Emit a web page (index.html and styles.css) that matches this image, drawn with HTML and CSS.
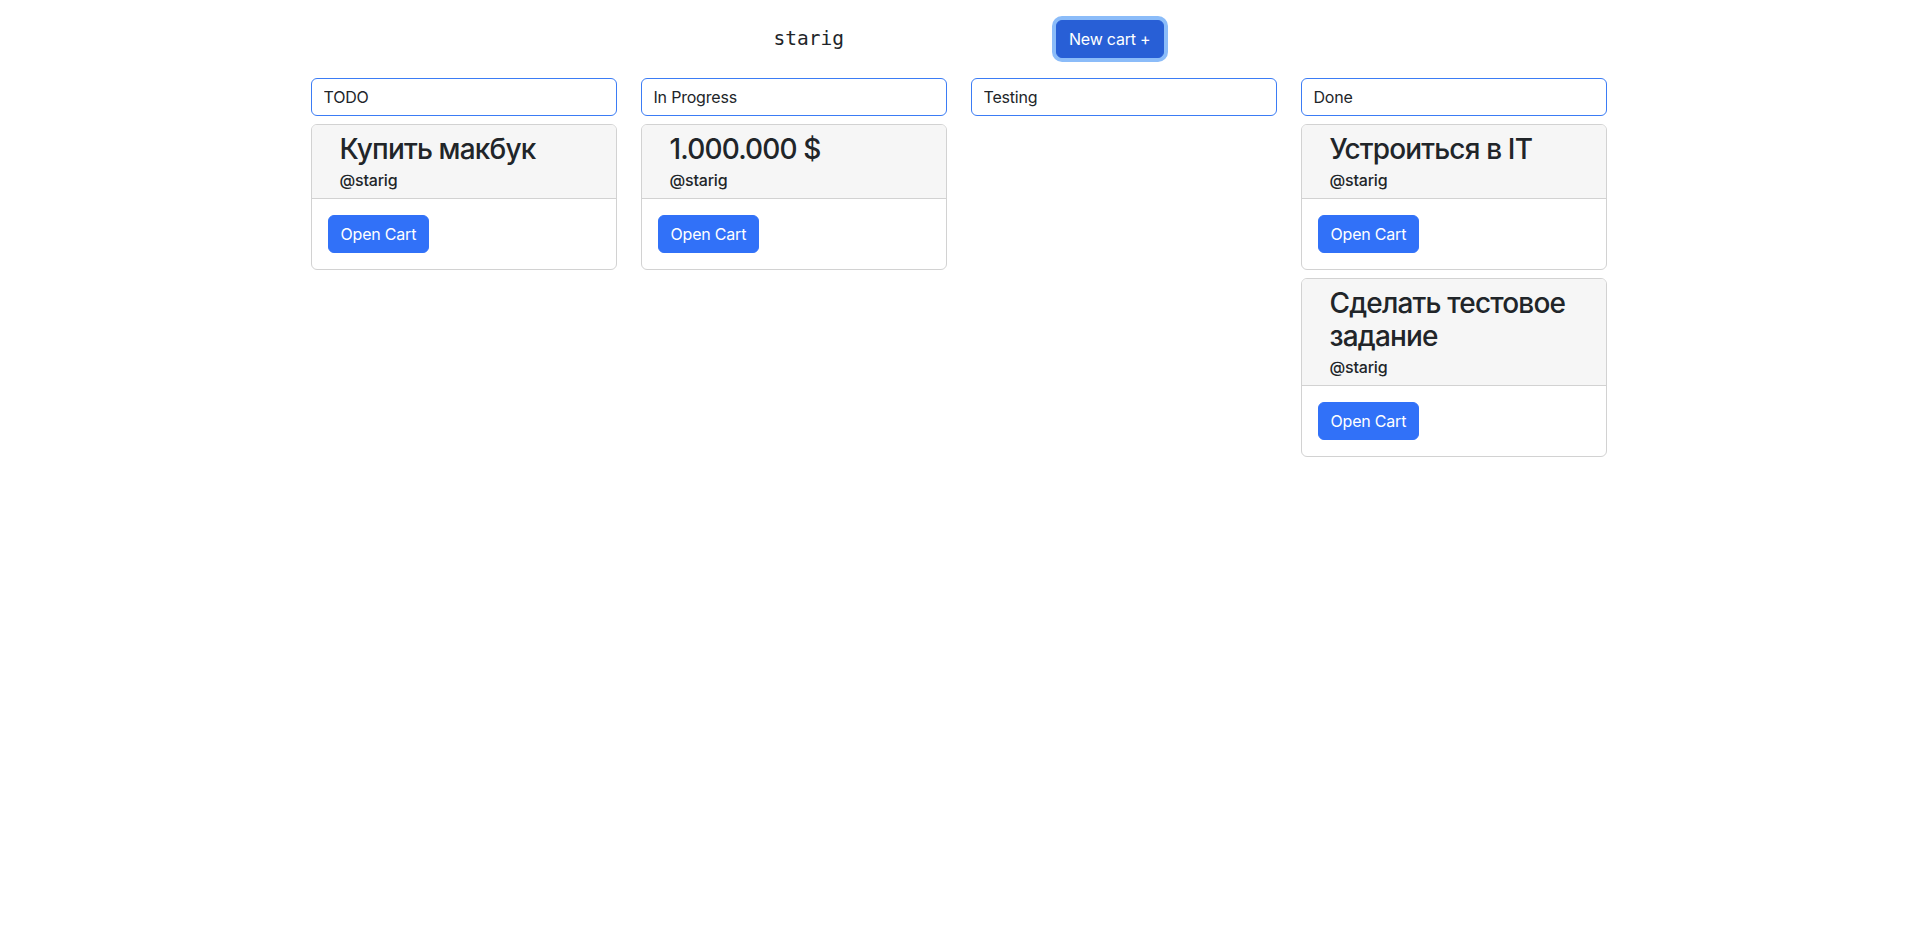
FILE: index.html
```html
<!DOCTYPE html>
<html lang="ru">
<head>
<meta charset="utf-8">
<title>Kanban</title>
<link rel="stylesheet" href="styles.css">
</head>
<body>
<header class="topbar">
  <span class="username">starig</span>
  <button class="btn btn-new">New cart +</button>
</header>
<main class="board">
  <section class="column">
    <input class="col-title" value="TODO">
    <div class="card">
      <div class="card-header"><div class="card-inner"><h3 class="card-title">Купить макбук</h3><h6 class="card-subtitle">@starig</h6></div></div>
      <div class="card-body"><button class="btn btn-primary">Open Cart</button></div>
    </div>
  </section>
  <section class="column">
    <input class="col-title" value="In Progress">
    <div class="card">
      <div class="card-header"><div class="card-inner"><h3 class="card-title">1.000.000 $</h3><h6 class="card-subtitle">@starig</h6></div></div>
      <div class="card-body"><button class="btn btn-primary">Open Cart</button></div>
    </div>
  </section>
  <section class="column">
    <input class="col-title" value="Testing">
  </section>
  <section class="column">
    <input class="col-title" value="Done">
    <div class="card">
      <div class="card-header"><div class="card-inner"><h3 class="card-title">Устроиться в IT</h3><h6 class="card-subtitle">@starig</h6></div></div>
      <div class="card-body"><button class="btn btn-primary">Open Cart</button></div>
    </div>
    <div class="card">
      <div class="card-header"><div class="card-inner"><h3 class="card-title">Сделать тестовое задание</h3><h6 class="card-subtitle">@starig</h6></div></div>
      <div class="card-body"><button class="btn btn-primary">Open Cart</button></div>
    </div>
  </section>
</main>
</body>
</html>
```

FILE: styles.css
```css
* { box-sizing: border-box; }
html, body {
  margin: 0;
  background: #fff;
  font-family: Inter, "Noto Sans", "Liberation Sans", sans-serif;
  font-size: 16px;
  line-height: 1.5;
  color: #212529;
}
.topbar {
  display: flex;
  justify-content: center;
  align-items: center;
  gap: 212px;
  padding: 20px 0 0 20px;
  height: 58px;
}
.username {
  font-family: "DejaVu Sans Mono", "Liberation Mono", monospace;
  font-size: 19.5px;
  color: #212529;
}
.btn {
  font-family: inherit;
  font-size: 16px;
  line-height: 24px;
  padding: 6px 12px;
  border: 1px solid transparent;
  border-radius: 6px;
  color: #fff;
  letter-spacing: -0.2px;
  cursor: pointer;
}
.btn-new {
  background: #285fd6;
  border-color: #285fd6;
  box-shadow: 0 0 0 4px #8bbcf9;
}
.btn-primary {
  background: #3171f8;
  border-color: #3171f8;
}
.board {
  width: 1320px;
  margin: 20px auto 0;
  display: grid;
  grid-template-columns: repeat(4, 1fr);
  padding: 0;
}
.column {
  padding: 0 12px;
  display: flex;
  flex-direction: column;
  align-items: stretch;
}
.col-title {
  display: block;
  width: 100%;
  height: 38px;
  padding: 6px 12px;
  font-family: inherit;
  font-size: 16px;
  line-height: 24px;
  letter-spacing: -0.2px;
  color: #212529;
  background: #fff;
  border: 1px solid #3b7cf5;
  border-radius: 6px;
  outline: none;
  margin-bottom: 8px;
}
.card {
  border: 1px solid #d2d2d2;
  border-radius: 6px;
  background: #fff;
  margin-bottom: 8px;
  overflow: hidden;
}
.card-header {
  background: #f6f6f6;
  padding: 8px 16px;
  border-bottom: 1px solid #d2d2d2;
}
.card-inner {
  padding: 0 4px 0 12px;
}
.card-title {
  margin: 0 0 8px;
  font-size: 28px;
  font-weight: 500;
  line-height: 1.2;
  letter-spacing: -0.03em;
}
.card-subtitle {
  margin: -4px 0 0;
  font-size: 16px;
  font-weight: 500;
  line-height: 1.2;
  letter-spacing: -0.2px;
}
.card-body {
  padding: 16px;
}
```
